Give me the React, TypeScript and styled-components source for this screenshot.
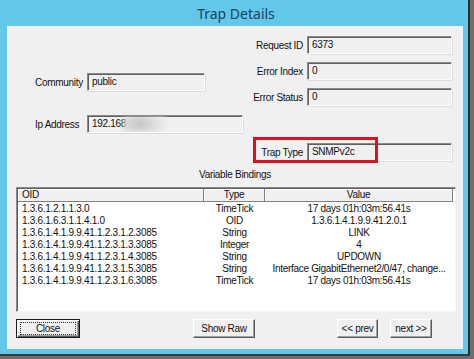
import styled, { createGlobalStyle } from "styled-components";

const GlobalStyle = createGlobalStyle`
  html, body {
    margin: 0;
    padding: 0;
    background: #6e6e6e;
  }
  body {
    font-family: "Liberation Sans", Arial, sans-serif;
    width: 474px;
    height: 359px;
    overflow: hidden;
  }
`;

type Row = { oid: string; type: string; value: string };

const rows: Row[] = [
  { oid: "1.3.6.1.2.1.1.3.0", type: "TimeTick", value: "17 days 01h:03m:56.41s" },
  { oid: "1.3.6.1.6.3.1.1.4.1.0", type: "OID", value: "1.3.6.1.4.1.9.9.41.2.0.1" },
  { oid: "1.3.6.1.4.1.9.9.41.1.2.3.1.2.3085", type: "String", value: "LINK" },
  { oid: "1.3.6.1.4.1.9.9.41.1.2.3.1.3.3085", type: "Integer", value: "4" },
  { oid: "1.3.6.1.4.1.9.9.41.1.2.3.1.4.3085", type: "String", value: "UPDOWN" },
  { oid: "1.3.6.1.4.1.9.9.41.1.2.3.1.5.3085", type: "String", value: "Interface GigabitEthernet2/0/47, change..." },
  { oid: "1.3.6.1.4.1.9.9.41.1.2.3.1.6.3085", type: "TimeTick", value: "17 days 01h:03m:56.41s" },
];

const App = () => (
  <>
    <GlobalStyle />
    <Window>
      <TitleBar>Trap Details</TitleBar>
      <Panel>
        <TopSection>
          <LeftCol>
            <Field>
              <LeftLabel>Community</LeftLabel>
              <Edit $w={118}>public</Edit>
            </Field>
            <Field>
              <LeftLabel>Ip Address</LeftLabel>
              <Edit $w={156}>
                192.168
                <Blur />
              </Edit>
            </Field>
          </LeftCol>
          <RightCol>
            <Field>
              <RightLabel>Request ID</RightLabel>
              <Edit $w={145}>6373</Edit>
            </Field>
            <Field>
              <RightLabel>Error Index</RightLabel>
              <Edit $w={145}>0</Edit>
            </Field>
            <Field>
              <RightLabel>Error Status</RightLabel>
              <Edit $w={145}>0</Edit>
            </Field>
            <TrapField>
              <RightLabel>Trap Type</RightLabel>
              <Edit $w={145}>SNMPv2c</Edit>
              <Highlight />
            </TrapField>
          </RightCol>
        </TopSection>

        <GroupCaption>Variable Bindings</GroupCaption>

        <ListView>
          <HeaderRow>
            <HeaderCell $w={186} $align="left">OID</HeaderCell>
            <HeaderCell $w={61} $align="center">Type</HeaderCell>
            <HeaderCell $w={188} $align="center">Value</HeaderCell>
          </HeaderRow>
          {rows.map((r, i) => (
            <ItemRow key={i}>
              <Cell $w={186} $align="left">{r.oid}</Cell>
              <Cell $w={61} $align="center">{r.type}</Cell>
              <Cell $w={188} $align="center">{r.value}</Cell>
            </ItemRow>
          ))}
        </ListView>

        <ButtonRow>
          <Button $w={64} $default>
            <Focus>Close</Focus>
          </Button>
          <Button $w={62} $ml={113}>Show Raw</Button>
          <Button $w={41} $ml={82}>&lt;&lt; prev</Button>
          <Button $w={42} $ml={12}>next &gt;&gt;</Button>
        </ButtonRow>
      </Panel>
    </Window>
  </>
);

export default App;

const Window = styled.div`
  width: 470px;
  height: 356px;
  box-sizing: border-box;
  background: #62c7e8;
  border-right: 2px solid #2e2e2e;
  border-bottom: 2px solid #3a3a3a;
  padding: 0 5px 5px 7px;
  display: flex;
  flex-direction: column;
`;

const TitleBar = styled.div`
  height: 26px;
  display: flex;
  align-items: center;
  justify-content: center;
  font-family: "Noto Sans", "Open Sans", sans-serif;
  font-size: 14px;
  color: #17435f;
  padding-left: 2px;
`;

const Panel = styled.div`
  flex: 1;
  background: #f0f0f0;
  display: flex;
  flex-direction: column;
  font-size: 10px;
  letter-spacing: -0.3px;
  color: #111;
`;

const TopSection = styled.div`
  display: flex;
  height: 143px;
`;

const LeftCol = styled.div`
  width: 240px;
  padding: 47px 0 0 28px;
  box-sizing: border-box;
  display: flex;
  flex-direction: column;
  gap: 24px;
`;

const RightCol = styled.div`
  flex: 1;
  padding-top: 10px;
  display: flex;
  flex-direction: column;
  gap: 8px;
`;

const Field = styled.div`
  display: flex;
  align-items: center;
  height: 18px;
`;

const TrapField = styled(Field)`
  position: relative;
  margin-top: 29px;
`;

const LeftLabel = styled.span`
  width: 52px;
`;

const RightLabel = styled.span`
  width: 56px;
  padding-right: 4px;
  text-align: right;
`;

const Edit = styled.div<{ $w: number }>`
  position: relative;
  width: ${(p) => p.$w}px;
  height: 18px;
  box-sizing: border-box;
  padding: 2px 0 0 4px;
  background: #f0f0f0;
  border-top: 1px solid #8a8a8a;
  border-left: 1px solid #8a8a8a;
  border-right: 1px solid #fcfcfc;
  border-bottom: 1px solid #fcfcfc;
  box-shadow: inset 1px 1px 0 #5f5f5f, 1px 1px 0 #dedede;
  white-space: nowrap;
  overflow: hidden;
`;

const Blur = styled.span`
  position: absolute;
  left: 36px;
  top: 1px;
  width: 42px;
  height: 14px;
  background: linear-gradient(90deg, #d9d9d9, #c9c9c9 40%, #dcdcdc 70%, #ececec);
  filter: blur(2px);
`;

const Highlight = styled.div`
  position: absolute;
  left: 6px;
  top: -6px;
  width: 119px;
  height: 20px;
  border: 3px solid #e0101e;
  pointer-events: none;
`;

const GroupCaption = styled.div`
  height: 18px;
  text-align: center;
  line-height: 12px;
`;

const ListView = styled.div`
  margin: 0 7px 0 9px;
  height: 125px;
  box-sizing: border-box;
  background: #ffffff;
  border-top: 1px solid #8a8a8a;
  border-left: 1px solid #8a8a8a;
  border-right: 1px solid #f8f8f8;
  border-bottom: 1px solid #f8f8f8;
  box-shadow: inset 1px 1px 0 #5f5f5f;
  padding: 1px 0 0 1px;
  overflow: hidden;
`;

const HeaderRow = styled.div`
  display: flex;
  height: 13px;
  margin-bottom: 1px;
`;

const HeaderCell = styled.div<{ $w: number; $align: string }>`
  width: ${(p) => p.$w}px;
  box-sizing: border-box;
  text-align: ${(p) => p.$align};
  padding-left: ${(p) => (p.$align === "left" ? "4px" : "0")};
  line-height: 12px;
  background: #f0f0f0;
  border-right: 1px solid #808080;
  border-bottom: 1px solid #808080;
  box-shadow: inset 1px 1px 0 #ffffff;
`;

const ItemRow = styled.div`
  display: flex;
  height: 12px;
  line-height: 12px;
`;

const Cell = styled.div<{ $w: number; $align: string }>`
  width: ${(p) => p.$w}px;
  text-align: ${(p) => p.$align};
  padding-left: ${(p) => (p.$align === "left" ? "4px" : "0")};
  box-sizing: border-box;
  white-space: nowrap;
  overflow: hidden;
`;

const ButtonRow = styled.div`
  display: flex;
  align-items: center;
  padding: 7px 0 0 9px;
`;

const Button = styled.div<{ $w: number; $ml?: number; $default?: boolean }>`
  width: ${(p) => p.$w}px;
  height: 19px;
  margin-left: ${(p) => p.$ml ?? 0}px;
  box-sizing: border-box;
  display: flex;
  align-items: center;
  justify-content: center;
  background: #f0f0f0;
  border: 1px solid ${(p) => (p.$default ? "#1a1a1a" : "transparent")};
  box-shadow: inset 1px 1px 0 #ffffff, inset -1px -1px 0 #5a5a5a,
    inset -2px -2px 0 #a0a0a0;
  ${(p) =>
    !p.$default &&
    `border-color: #ffffff #5a5a5a #5a5a5a #ffffff; box-shadow: inset -1px -1px 0 #a0a0a0;`}
`;

const Focus = styled.span`
  flex: 1;
  margin: 2px 3px;
  height: 11px;
  line-height: 11px;
  text-align: center;
  border: 1px dotted #333;
`;
